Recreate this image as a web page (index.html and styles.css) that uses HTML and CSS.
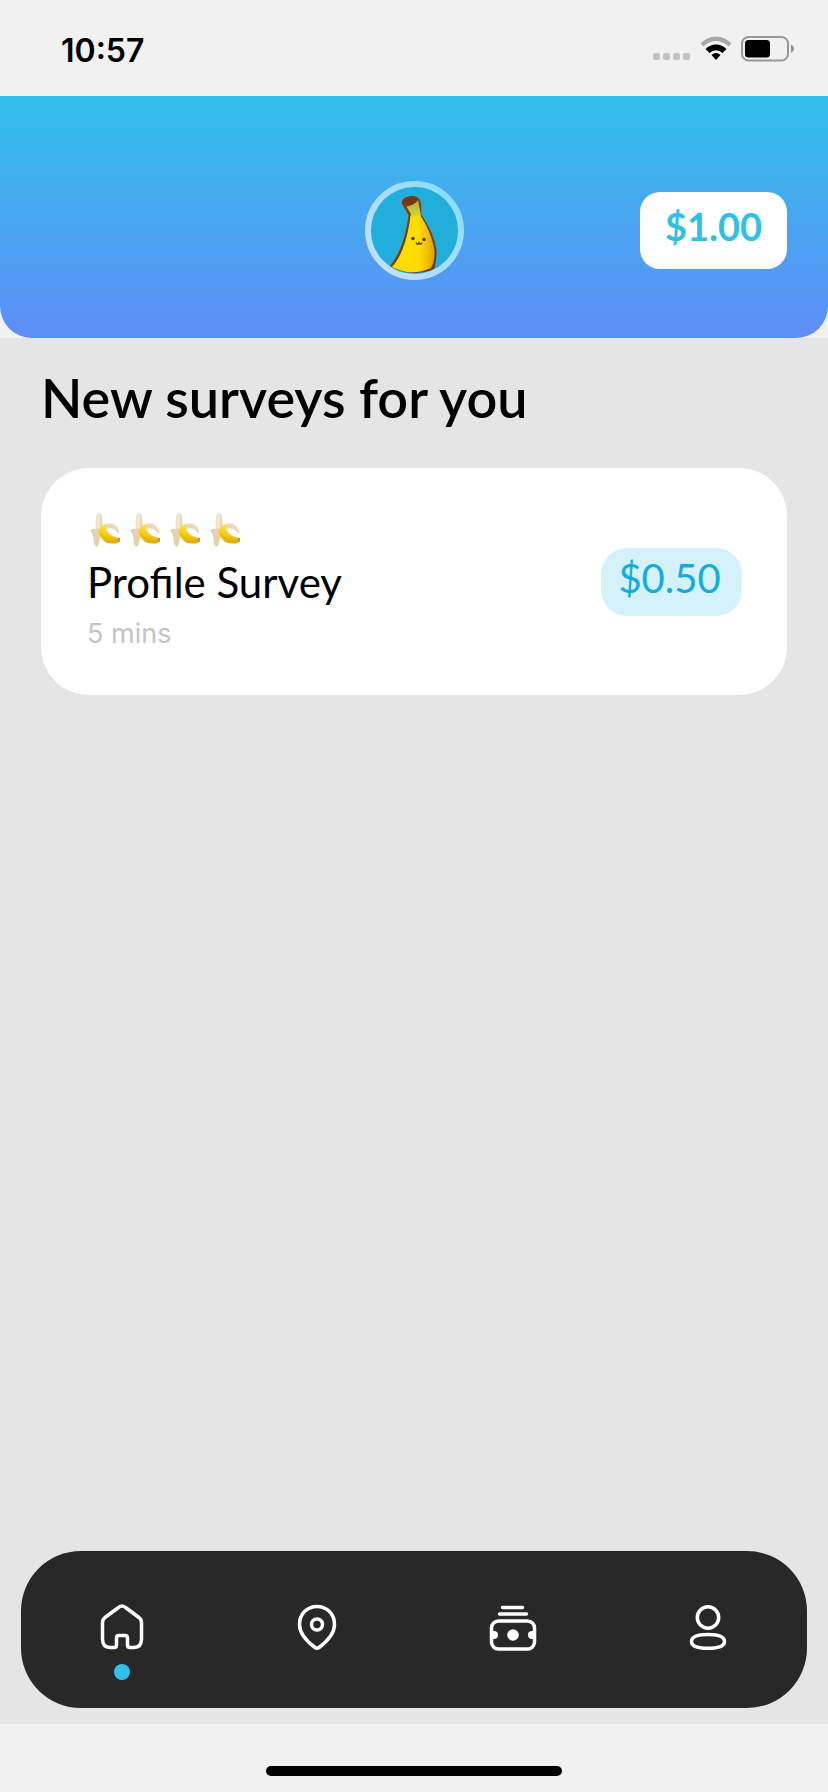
FILE: index.html
```html
<!DOCTYPE html>
<html lang="en">
<head>
<meta charset="utf-8">
<meta name="viewport" content="width=device-width, initial-scale=1">
<title>Surveys</title>
<link rel="stylesheet" href="styles.css">
</head>
<body>
<div class="app">
  <div class="status">
    <time class="clock">10:57</time>
    <div class="indicators">
      <svg width="38" height="26" viewBox="0 0 38 26" fill="#c2c2c2" aria-hidden="true">
        <rect x="0" y="17" width="7" height="7" rx="2"/><rect x="10" y="17" width="7" height="7" rx="2"/><rect x="20" y="17" width="7" height="7" rx="2"/><rect x="30" y="17" width="7" height="7" rx="2"/>
      </svg>
      <svg width="32" height="26" viewBox="0 0 32 26" aria-hidden="true">
        <path d="M0.500 7.500Q7 0.500 16 0.500T31.500 7.500L28.500 10.500Q23 5 16 5T3.500 10.500Z" fill="#a9a9a9"/>
        <path d="M5.500 13Q10 8.500 16 8.500T26.500 13L22.500 17Q19.500 14.300 16 14.300T9.500 17Z"/>
        <path d="M11.500 19Q13.500 17 16 17T20.500 19L16 24Z"/>
      </svg>
      <svg width="53" height="26" viewBox="0 0 53 26" aria-hidden="true">
        <rect x="1" y="1" width="46" height="23.500" rx="6.500" fill="none" stroke="#999" stroke-width="2"/>
        <rect x="4" y="4" width="25" height="17.500" rx="3.500"/>
        <path d="M50 8.500Q53 10 53 12.750T50 17Z" fill="#8d8d8d"/>
      </svg>
    </div>
  </div>

  <div class="header-wrap">
    <header class="header">
      <button class="avatar" type="button" aria-label="Account avatar">
        <svg class="avatar-art" viewBox="0 0 99 99" aria-hidden="true">
          <defs>
            <linearGradient id="ring" x1="1" y1="0" x2="0" y2="1"><stop offset="0" stop-color="#84dcff"/><stop offset="1" stop-color="#c9e0ff"/></linearGradient>
            <linearGradient id="peel" x1="0" y1="0" x2="1" y2="0"><stop offset="0.620" stop-color="#ffdc04"/><stop offset="0.800" stop-color="#f3c405"/><stop offset="1" stop-color="#d99f0a"/></linearGradient>
            <linearGradient id="stalk" x1="0" y1="0" x2="0" y2="1"><stop offset="0" stop-color="#bda343"/><stop offset="0.450" stop-color="#b9c43d"/><stop offset="1" stop-color="#e3d71c"/></linearGradient>
            <clipPath id="disc"><circle cx="49.500" cy="49.500" r="43"/></clipPath>
          </defs>
          <circle cx="49.500" cy="49.500" r="46.500" fill="#22aedb" stroke="url(#ring)" stroke-width="6"/>
          <g clip-path="url(#disc)">
            <path d="M24 86C36 72 41 54 43.500 34L37 23Q36 18 42 16Q51 13 55 19Q57 25 56 33Q69 52 71.500 69Q72 80 69 89Q46 96 24 86Z" fill="#7b3d10"/>
            <path d="M27 86C38 74 43 54 45.500 35Q50 33 55 34Q66 50 69.500 69Q70 80 66 87Q46 96 27 86Z" fill="url(#peel)"/>
            <path d="M41 25Q49 25 53 19L55 29L56 36Q50 34 45 37L46 33Z" fill="url(#stalk)"/>
            <path d="M37 22Q37 17 43 16Q51 14 53 19Q48 21 46 23L41 26Z" fill="#7a3517"/>
            <circle cx="48" cy="57.500" r="1.800" fill="#5c3b09"/><circle cx="59" cy="58.500" r="1.800" fill="#5c3b09"/>
            <path d="M51 61.500Q52.500 64.500 54 62Q55.500 64.500 57 61.500" fill="none" stroke="#65400a" stroke-width="1.500"/>
          </g>
        </svg>
      </button>
      <button class="balance" type="button">$1.00</button>
    </header>
  </div>

  <main class="main">
    <h1 class="title">New surveys for you</h1>
    <a class="card" href="#survey">
      <span class="details">
        <span class="rating" role="img" aria-label="4 bananas">
          <svg class="banana" viewBox="0 0 30 34" aria-hidden="true">
            <defs>
              <linearGradient id="skin" x1="0" y1="0" x2="0" y2="1"><stop offset="0" stop-color="#ffe239"/><stop offset="0.550" stop-color="#f7cb18"/><stop offset="1" stop-color="#e0aa05"/></linearGradient>
              <linearGradient id="flesh" x1="0" y1="0" x2="1" y2="0"><stop offset="0" stop-color="#efe0bf"/><stop offset="0.500" stop-color="#f5e9d0"/><stop offset="1" stop-color="#dfcaa4"/></linearGradient>
            </defs>
            <g id="banana-art">
              <path d="M15 12Q21 8 26 13Q30 17 29 21Q23 14 16 16Z" fill="#ecd8ba"/>
              <path d="M6 18Q5 3 7 1Q9-1 11 1Q13 5 12 17Z" fill="url(#flesh)"/>
              <path d="M0 17Q5 15 10 16Q11 25 8 33Q6 35 4 31Q4 23 0 17Z" fill="#e5d1ac"/>
              <path d="M9 18Q10 12 17 11Q15 14 17 18Q21 24 30 25Q31 28 28 30Q17 32 12 26Q9 23 9 18Z" fill="url(#skin)"/>
              <path d="M10 20Q15 28 27 28" fill="none" stroke="#dfb010" stroke-width="1"/>
              <path d="M28 25L30 25L30 28L28 29Z" fill="#a9a040"/>
            </g>
          </svg>
          <svg class="banana" viewBox="0 0 30 34" aria-hidden="true"><use href="#banana-art"/></svg>
          <svg class="banana" viewBox="0 0 30 34" aria-hidden="true"><use href="#banana-art"/></svg>
          <svg class="banana" viewBox="0 0 30 34" aria-hidden="true"><use href="#banana-art"/></svg>
        </span>
        <span class="name">Profile Survey</span>
        <span class="duration">5 mins</span>
      </span>
      <span class="reward">$0.50</span>
    </a>
  </main>

  <nav class="tabs" aria-label="Main">
    <a class="tab active" href="#home" aria-label="Home" aria-current="page">
      <svg class="tab-icon" viewBox="0 0 48 48"><path d="M20.500 4.500Q24 1.500 27.500 4.500L41 14.500Q43.500 16.500 43.500 19.500V36Q43.500 44.500 36 44.500H32Q29.500 44.500 29.500 42V35Q29.500 32.500 27 32.500H21Q18.500 32.500 18.500 35V42Q18.500 44.500 16 44.500H12Q4.500 44.500 4.500 36V19.500Q4.500 16.500 7 14.500Z"/></svg>
    </a>
    <a class="tab" href="#nearby" aria-label="Nearby">
      <svg class="tab-icon" viewBox="0 0 48 48"><path d="M24 3.500C14 3.500 6.500 11 6.500 21.500C6.500 31 14 38.500 22 44.500Q24 46 26 44.500C34 38.500 41.500 31 41.500 21.500C41.500 11 34 3.500 24 3.500Z"/><circle cx="24" cy="21.500" r="5.500"/></svg>
    </a>
    <a class="tab" href="#cash" aria-label="Cash">
      <svg class="tab-icon" viewBox="0 0 48 48"><path d="M13.500 4.500H33.500M10.500 11H37.500"/><rect x="2.500" y="18" width="43" height="28" rx="7"/><circle class="solid" cx="24" cy="32" r="5.800"/><path class="solid" d="M3 28H5A4 4 0 0 1 5 36H3ZM45 28H43A4 4 0 0 0 43 36H45Z"/></svg>
    </a>
    <a class="tab" href="#profile" aria-label="Profile">
      <svg class="tab-icon" viewBox="0 0 48 48"><circle cx="24" cy="14.500" r="10.700"/><path d="M24 31.500C32 31.500 40.500 33 40.500 38.500S32 45.300 24 45.300S7.500 43.800 7.500 38.500S16 31.500 24 31.500Z"/></svg>
    </a>
  </nav>

  <footer class="home-area"><div class="home-bar"></div></footer>
</div>
</body>
</html>
```

FILE: styles.css
```css
* { box-sizing: border-box; }

body {
  margin: 0;
  background: #f1f1f1;
  color: #000;
  font-family: Lato, "Open Sans", sans-serif;
}

.app {
  display: flex;
  flex-direction: column;
  min-height: 100vh;
  background: #e5e5e5;
}

.status {
  display: flex;
  align-items: center;
  justify-content: space-between;
  height: 96px;
  padding: 2px 34px 0 61px;
  background: #f1f1f1;
}

.clock {
  padding-top: 3px;
  font: 600 32px/40px Inter, sans-serif;
}

.indicators {
  display: flex;
  gap: 9px;
}

/* Light backing that shows behind the rounded lower corners. */
.header-wrap { background: #f1f1f1; }

.header {
  display: grid;
  grid-template-columns: 1fr auto 1fr;
  align-items: center;
  height: 242px;
  padding: 26px 41px 0;
  background: linear-gradient(#31c0e9, #5e8ef7);
  border-radius: 0 0 32px 32px;
}

.avatar {
  grid-column: 2;
  width: 99px;
  height: 99px;
  padding: 0;
  border: 0;
  border-radius: 50%;
  background: none;
}

.avatar-art { display: block; width: 100%; }

.balance {
  justify-self: end;
  width: 147px;
  height: 77px;
  padding: 0 0 8px;
  border: 0;
  border-radius: 20px;
  background: #fff;
  color: #31c0e5;
  font: 700 38px/44px Lato, sans-serif;
}

.main {
  flex: 1;
  padding: 26px 41px;
}

.title {
  margin: 0;
  font-size: 54px;
  line-height: 68px;
  font-weight: 600;
}

.card {
  display: flex;
  align-items: center;
  justify-content: space-between;
  margin-top: 36px;
  padding: 40px 45px 40px 46px;
  border-radius: 48px;
  background: #fff;
  color: inherit;
  text-decoration: none;
}

.details { display: flex; flex-direction: column; }

.rating {
  display: flex;
  gap: 10px;
  padding: 5px 3px;
}

.banana { width: 30px; height: 34px; }

.name { font-size: 42px; line-height: 60px; }

.duration {
  color: #c4c4c4;
  font: 400 27px/43px Inter, sans-serif;
}

.reward {
  width: 141px;
  height: 68px;
  padding-right: 4px;
  border-radius: 26px;
  background: #d5f1f9;
  color: #0fade0;
  font-size: 40px;
  line-height: 60px;
  text-align: center;
}

.tabs {
  display: grid;
  grid-template-columns: repeat(4, 1fr);
  height: 157px;
  margin: 0 21px 16px;
  padding: 0 1px 0 3px;
  border-radius: 60px;
  background: #282828;
}

.tab {
  display: flex;
  flex-direction: column;
  align-items: center;
  padding-top: 52px;
}

.tab.active::after {
  content: "";
  width: 16px;
  height: 16px;
  margin-top: 13px;
  border-radius: 50%;
  background: #31c0e9;
}

.tab-icon {
  width: 48px;
  height: 48px;
  fill: none;
  stroke: #fff;
  stroke-width: 3.500;
  stroke-linecap: round;
  stroke-linejoin: round;
}

.tab-icon .solid { fill: #fff; stroke: none; }

.home-area {
  display: flex;
  justify-content: center;
  align-items: flex-end;
  height: 68px;
  padding-bottom: 16px;
  background: #f1f1f1;
}

.home-bar {
  width: 296px;
  height: 10px;
  border-radius: 5px;
  background: #000;
}
```
